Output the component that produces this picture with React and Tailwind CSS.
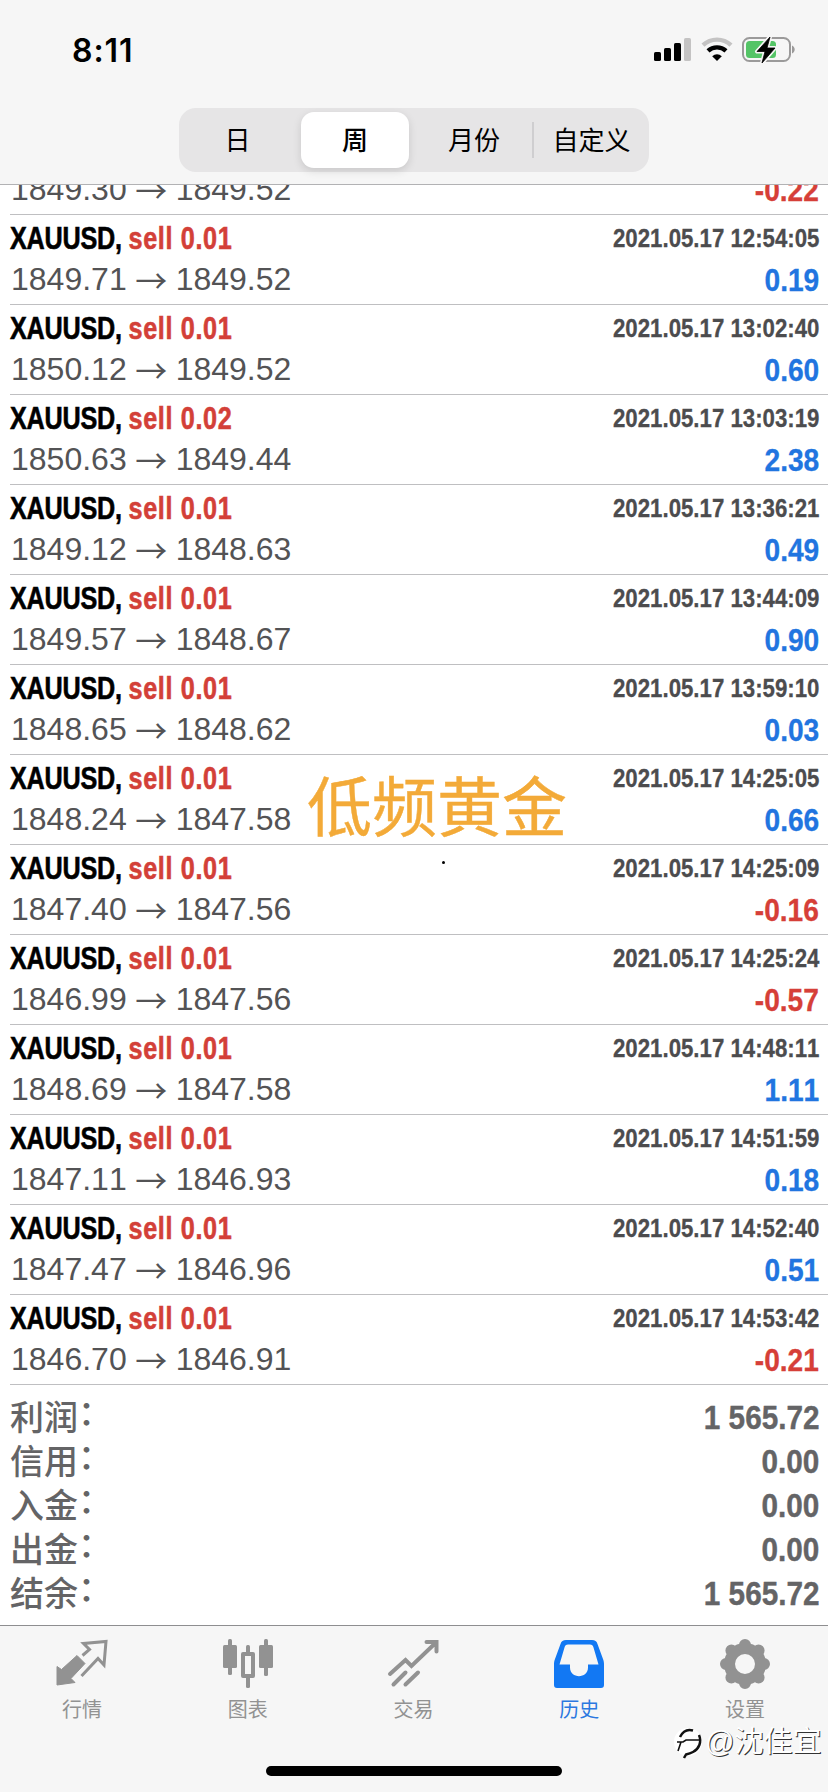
import React from 'react';
import { clsx } from 'clsx';

const deals = [
  { volume: '0.01', open: '1849.71', close: '1849.52', time: '2021.05.17 12:54:05', profit: '0.19' },
  { volume: '0.01', open: '1850.12', close: '1849.52', time: '2021.05.17 13:02:40', profit: '0.60' },
  { volume: '0.02', open: '1850.63', close: '1849.44', time: '2021.05.17 13:03:19', profit: '2.38' },
  { volume: '0.01', open: '1849.12', close: '1848.63', time: '2021.05.17 13:36:21', profit: '0.49' },
  { volume: '0.01', open: '1849.57', close: '1848.67', time: '2021.05.17 13:44:09', profit: '0.90' },
  { volume: '0.01', open: '1848.65', close: '1848.62', time: '2021.05.17 13:59:10', profit: '0.03' },
  { volume: '0.01', open: '1848.24', close: '1847.58', time: '2021.05.17 14:25:05', profit: '0.66' },
  { volume: '0.01', open: '1847.40', close: '1847.56', time: '2021.05.17 14:25:09', profit: '-0.16' },
  { volume: '0.01', open: '1846.99', close: '1847.56', time: '2021.05.17 14:25:24', profit: '-0.57' },
  { volume: '0.01', open: '1848.69', close: '1847.58', time: '2021.05.17 14:48:11', profit: '1.11' },
  { volume: '0.01', open: '1847.11', close: '1846.93', time: '2021.05.17 14:51:59', profit: '0.18' },
  { volume: '0.01', open: '1847.47', close: '1846.96', time: '2021.05.17 14:52:40', profit: '0.51' },
  { volume: '0.01', open: '1846.70', close: '1846.91', time: '2021.05.17 14:53:42', profit: '-0.21' },
];

const totals = [
  { label: '利润', value: '1 565.72' },
  { label: '信用', value: '0.00' },
  { label: '入金', value: '0.00' },
  { label: '出金', value: '0.00' },
  { label: '结余', value: '1 565.72' },
];

const StatusBar = () => (
  <div className="flex items-start justify-between h-[108px] pt-[30px] pl-[72px] pr-8">
    <span className="font-['Inter'] font-semibold text-[32px] leading-[42px] tracking-[0.9px]">8:11</span>
    <div className="flex items-center pt-[6px]">
      <svg width="38" height="26" viewBox="0 0 38 26">
        <rect x="0" y="15" width="7" height="9" rx="1.6" />
        <rect x="10" y="11" width="7" height="13" rx="1.6" />
        <rect x="20" y="6" width="7" height="18" rx="1.6" />
        <rect x="30" y="1" width="7" height="23" rx="1.6" fill="#c4c3c3" />
      </svg>
      <svg className="ml-[9px]" width="32" height="26" viewBox="0 0 32 26" fill="none">
        <path d="M2 8.2a20.5 20.5 0 0 1 28 0" stroke="#c4c3c3" strokeWidth="4.4" />
        <path d="M7 13.8a13.4 13.4 0 0 1 18 0" stroke="#000" strokeWidth="4.4" />
        <path d="M16 24l-4.8-4.8a7 7 0 0 1 9.6 0z" fill="#000" />
      </svg>
      <svg className="ml-[9px]" width="54" height="28" viewBox="0 0 54 28">
        <rect x="1" y="2" width="47" height="23" rx="6.5" fill="none" stroke="#9b9a9a" strokeWidth="2" />
        <path d="M50 9.5c3.6 1.6 3.6 6.4 0 8z" fill="#9b9a9a" />
        <rect x="4" y="5" width="30" height="17" rx="3.5" fill="#54c466" />
        <path d="M28 1L15 15.5h8L20 27l13-15h-8z" stroke="#f7f6f6" strokeWidth="4" strokeLinejoin="round" />
        <path d="M28 1L15 15.5h8L20 27l13-15h-8z" stroke="#000" strokeWidth="0.8" strokeLinejoin="round" />
      </svg>
    </div>
  </div>
);

const PeriodSwitch = () => (
  <div className="mx-auto flex w-[470px] h-16 p-1 rounded-[17px] bg-[#e6e5e6] text-[26px]">
    <button className="w-[118px] pr-[9px] pt-[2px]">日</button>
    <button className="w-[108px] pt-[2px] rounded-[13px] bg-white font-medium shadow-[0_3px_8px_rgba(0,0,0,0.13)]">周</button>
    <button className="w-[123px] pl-[7px] pt-[2px]">月份</button>
    <span className="w-[2px] h-9 my-auto bg-[#cfced0]" />
    <button className="flex-1 pl-[4px] pt-[2px]">自定义</button>
  </div>
);

const Prices = ({ open, close }) => (
  <span className="flex items-center pl-px text-[32px] text-[#535355]">
    {open}
    <span className="w-[49px] text-center font-['Noto_Sans_CJK_SC']">→</span>
    {close}
  </span>
);

const Profit = ({ value }) => (
  <span
    className={clsx(
      'mt-[2px] text-[32px] font-bold origin-right scale-x-[0.88] [-webkit-text-stroke:0.3px]',
      value.startsWith('-') ? 'text-[#d63f38]' : 'text-[#2175e0]'
    )}
  >
    {value}
  </span>
);

const DealRow = ({ deal }) => (
  <div className="ml-[10px] pr-[9px] h-[90px] border-b border-[#bfbfc1]">
    <div className="flex items-center justify-between h-12">
      <span className="text-[31.5px] font-bold origin-left scale-x-[0.8] whitespace-nowrap [-webkit-text-stroke:0.6px]">
        <span className="tracking-[-0.3px]">XAUUSD, </span>
        <span className="tracking-[0.8px] text-[#d34038]">sell {deal.volume}</span>
      </span>
      <span className="mb-[2px] text-[26px] font-bold origin-right scale-x-[0.855] text-[#4c4c4e] [-webkit-text-stroke:0.3px]">
        {deal.time}
      </span>
    </div>
    <div className="flex items-center justify-between h-8">
      <Prices open={deal.open} close={deal.close} />
      <Profit value={deal.profit} />
    </div>
  </div>
);

const QuotesIcon = () => (
  <svg width="52" height="52" viewBox="0 0 52 52" fill="none">
    <path d="M1 27.5l4.5 3L21 16.5l8 8-14 15 4 4-18 2.5z" fill="#929292" stroke="#929292" strokeLinejoin="round" />
    <path d="M26.5 16.5l7-6-6-6L50 2.5 48 26l-6-6.5L25.5 37" stroke="#929292" strokeWidth="3" />
  </svg>
);

const ChartIcon = () => (
  <svg width="52" height="52" viewBox="0 0 52 52" fill="#929292">
    <rect x="1" y="6" width="14" height="23" rx="1.5" />
    <rect x="6" y="0" width="4" height="36" rx="1.5" />
    <rect x="37" y="6" width="14" height="23" rx="1.5" />
    <rect x="42" y="0" width="4" height="37" rx="1.5" />
    <rect x="24" y="6" width="4" height="8" rx="1.5" />
    <rect x="24" y="37" width="4" height="12" rx="1.5" />
    <rect x="21" y="15" width="10" height="22" fill="none" stroke="#929292" strokeWidth="4" strokeLinejoin="round" />
  </svg>
);

const TradeIcon = () => (
  <svg width="52" height="52" viewBox="0 0 52 52" fill="none" stroke="#929292" strokeWidth="4" strokeLinecap="round">
    <path d="M3 35l15.5-14 6 6L49 3.5M39.5 3h10v9.5" />
    <path d="M6.5 45.5l12-12M18.5 45.5l12.5-12" />
  </svg>
);

const HistoryIcon = () => (
  <svg width="52" height="52" viewBox="0 0 52 52">
    <path
      d="M13 1h26c3 0 4.500 1 5.500 4l5.500 15c.7 2 1 3 1 5v21c0 2-1 3-3 3H4c-2 0-3-1-3-3V25c0-2 .3-3 1-5L7.500 5c1-3 2.500-4 5.500-4zM15 5.500c-2 0-3 1-3.500 3L6.500 25.500H17v3c0 11.500 18 11.500 18 0v-3h10.500L40.500 8.500c-.5-2-1.500-3-3.500-3z"
      fill="#1278f3"
      fillRule="evenodd"
    />
  </svg>
);

const SettingsIcon = () => (
  <svg width="52" height="52" viewBox="0 0 52 52" fill="none">
    <circle cx="26" cy="25" r="15.5" stroke="#929292" strokeWidth="11" />
    <g stroke="#929292" strokeWidth="12" strokeLinecap="round">
      <path d="M26 6v3M26 41v3M7 25h3M42 25h3" />
      <path d="M12.4 11.4l2 2M37.6 36.6l2 2M12.4 38.6l2-2M37.6 13.4l2-2" />
    </g>
  </svg>
);

const tabs = [
  { label: '行情', icon: QuotesIcon },
  { label: '图表', icon: ChartIcon },
  { label: '交易', icon: TradeIcon },
  { label: '历史', icon: HistoryIcon, active: true },
  { label: '设置', icon: SettingsIcon },
];

const TabBar = () => (
  <nav className="h-[167px] border-t border-[#8e8e90] bg-[#f6f6f6] flex flex-col">
    <div className="grid grid-cols-5 pt-[13px] -ml-px">
      {tabs.map(({ label, icon: Icon, active }) => (
        <button
          key={label}
          className={clsx('flex flex-col items-center text-[20px]', active ? 'text-[#2b78e0]' : 'text-[#929292]')}
        >
          <Icon />
          <span className="leading-[30px] mt-[4px]">{label}</span>
        </button>
      ))}
    </div>
    <div className="w-[296px] h-[10px] mx-auto mt-auto mb-4 rounded-full bg-black" />
  </nav>
);

const Watermark = () => (
  <div className="absolute left-[672px] top-[1722px] flex items-center text-[29px] leading-10 text-white [text-shadow:1px_1px_0.5px_#333]">
    <svg width="33" height="36" viewBox="0 0 33 36" fill="none">
      <circle cx="16" cy="18" r="14" fill="#fff" />
      <path d="M8 13c3-6 8-8 13-6.500" stroke="#111" strokeWidth="2.5" />
      <path d="M27 11c3 7 0 14-6 17-3 1.500-5 2-7 2.500l-2 3.500" stroke="#111" strokeWidth="2.5" />
      <path d="M5 18h6l3-2h14M9 18l-3 9" stroke="#111" strokeWidth="1.6" />
    </svg>
    @沈佳宜
  </div>
);

const App = () => {
  return (
    <div className="relative flex flex-col w-[828px] h-[1792px] overflow-hidden bg-white text-black font-['Liberation_Sans','Noto_Sans_CJK_SC',sans-serif] [font-kerning:none]">
      <header className="h-[185px] shrink-0 border-b border-[#b2b2b4] bg-[#f6f6f6]">
        <StatusBar />
        <PeriodSwitch />
      </header>

      {/* Row scrolled under the header */}
      <div className="ml-[10px] pr-[9px] h-[30px] shrink-0 overflow-hidden border-b border-[#bfbfc1] flex items-end">
        <div className="flex flex-1 items-center justify-between h-8 mb-[9px]">
          <Prices open="1849.30" close="1849.52" />
          <Profit value="-0.22" />
        </div>
      </div>

      {deals.map((deal) => (
        <DealRow key={deal.time} deal={deal} />
      ))}

      <div className="flex-1 pt-[11px] pl-[10px] pr-[9px] text-[#646466]">
        {totals.map(({ label, value }) => (
          <div key={label} className="flex items-center justify-between h-11 font-bold">
            <span className="text-[34px] font-medium">
              {label}
              <span className="relative -top-[5px]">：</span>
            </span>
            <span className="text-[33px] origin-right scale-x-[0.9] [-webkit-text-stroke:0.4px]">{value}</span>
          </div>
        ))}
      </div>

      <TabBar />

      <div className="absolute left-[307px] top-[763px] text-[65px] leading-[92px] text-[#f3aa38] [-webkit-text-stroke:0.4px]">
        低频黄金
      </div>
      <div className="absolute left-[442px] top-[861px] size-[3px] rounded-full bg-black" />
      <Watermark />
    </div>
  );
};

export default App;
